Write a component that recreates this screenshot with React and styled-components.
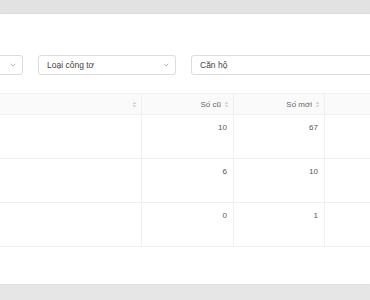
import React from "react";
import styled, { createGlobalStyle } from "styled-components";

const Global = createGlobalStyle`
  html, body { margin: 0; padding: 0; }
  body {
    background: #e3e3e3;
    font-family: "Liberation Sans", Arial, sans-serif;
    overflow: hidden;
    width: 370px;
    height: 300px;
  }
`;

const Page = styled.div`
  padding-top: 14px;
  height: 300px;
  box-sizing: border-box;
  background: linear-gradient(#e2e2e2, #e6e6e6);
`;

const Card = styled.div`
  background: #fff;
  height: 270px;
  box-shadow: 0 0 2px rgba(0, 0, 0, 0.08);
  padding-top: 41px;
  box-sizing: border-box;
  overflow: hidden;
`;

const Filters = styled.div`
  display: flex;
  gap: 15px;
  margin-left: -115px;
`;

const Select = styled.div`
  flex: 0 0 auto;
  width: ${(p) => p.$w || 138}px;
  height: 20px;
  box-sizing: border-box;
  border: 1px solid #dcdcdc;
  border-radius: 3px;
  display: flex;
  align-items: center;
  justify-content: space-between;
  padding: 0 6px 0 8px;
  font-size: 8.5px;
  color: #444;
`;

const Chevron = () => (
  <svg width="6" height="4" viewBox="0 0 6 4">
    <path d="M0.8 0.8 L3 3 L5.2 0.8" fill="none" stroke="#aaa" strokeWidth="0.8" />
  </svg>
);

const Table = styled.div`
  margin-top: 18px;
  display: grid;
  grid-template-columns: 142px 92px 91px 1fr;
  width: 370px;
`;

const HeadCell = styled.div`
  height: 22px;
  box-sizing: border-box;
  background: #fafafa;
  border-top: 1px solid #eef0f5;
  border-bottom: 1px solid #eef0f5;
  border-right: ${(p) => (p.$last ? "none" : "1px solid #eef0f5")};
  display: flex;
  align-items: center;
  justify-content: flex-end;
  gap: 3px;
  padding-right: 4px;
  font-size: 8px;
  color: #666;
`;

const Cell = styled.div`
  height: 44px;
  box-sizing: border-box;
  border-bottom: 1px solid #eef0f5;
  border-right: ${(p) => (p.$last ? "none" : "1px solid #eef0f5")};
  padding: 8px 6px 0 0;
  text-align: right;
  font-size: 8px;
  color: #555;
`;

const Sort = () => (
  <svg width="5" height="7" viewBox="0 0 5 7">
    <path d="M2.5 0.5 L4.5 3 L0.5 3 Z" fill="#d4d4dc" />
    <path d="M2.5 6.5 L4.5 4 L0.5 4 Z" fill="#d4d4dc" />
  </svg>
);

const rows = [
  ["10", "67"],
  ["6", "10"],
  ["0", "1"],
];

export default function App() {
  return (
    <>
      <Global />
      <Page>
        <Card>
          <Filters>
            <Select>
              <span />
              <Chevron />
            </Select>
            <Select>
              <span>Loại công tơ</span>
              <Chevron />
            </Select>
            <Select $w={200}>
              <span>Căn hộ</span>
            </Select>
          </Filters>
          <Table>
            <HeadCell>
              <Sort />
            </HeadCell>
            <HeadCell>
              Số cũ <Sort />
            </HeadCell>
            <HeadCell>
              Số mới <Sort />
            </HeadCell>
            <HeadCell $last />
            {rows.map((r, i) => (
              <React.Fragment key={i}>
                <Cell />
                <Cell>{r[0]}</Cell>
                <Cell>{r[1]}</Cell>
                <Cell $last />
              </React.Fragment>
            ))}
          </Table>
        </Card>
      </Page>
    </>
  );
}
